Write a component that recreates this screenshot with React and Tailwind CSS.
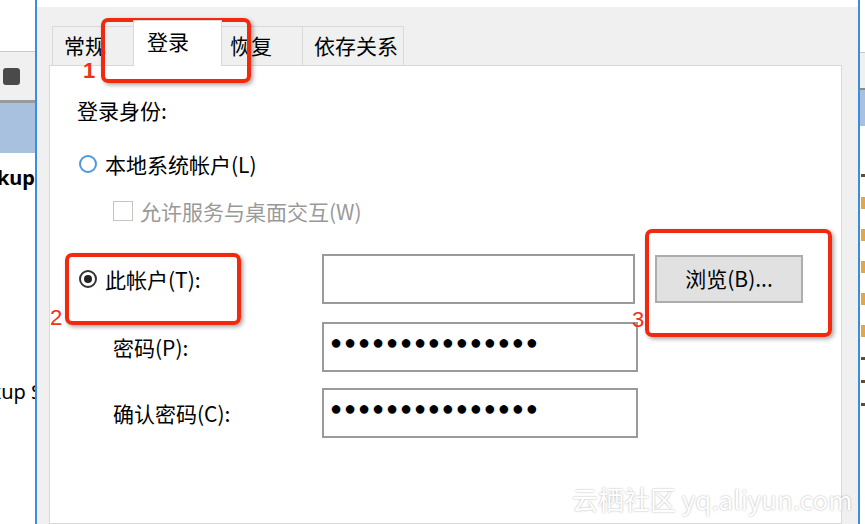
export default function App() {
  const dots = "●●●●●●●●●●●●●●●";
  return (
    <div className="relative flex w-[865px] h-[524px] overflow-hidden bg-white font-['Noto_Sans_CJK_SC',sans-serif] text-black">
      {/* left background window */}
      <div className="flex w-[35px] shrink-0 flex-col">
        <div className="h-[51px] bg-white" />
        <div className="h-px bg-[#c9c9c9]" />
        <div className="flex h-[48px] items-center bg-[#f0f0f0] pl-[3px]">
          <div className="h-[17px] w-[17px] rounded-[3px] bg-[#4a4a4a]" />
        </div>
        <div className="h-[3px] bg-[#9a9a9a]" />
        <div className="h-[50px] bg-[#a7c1de]" />
        <div className="mt-[11px] flex h-[28px] items-center justify-end overflow-hidden whitespace-nowrap font-['Noto_Sans',sans-serif] text-[20px] font-bold leading-[28px]">
          Backup
        </div>
        <div className="mt-[186px] flex h-[28px] items-center justify-end overflow-hidden whitespace-nowrap font-['Noto_Sans',sans-serif] text-[20px] leading-[28px]">
          <span className="mr-[-7px]">Backup S</span>
        </div>
      </div>
      <div className="w-[2px] shrink-0 bg-[#3b8de0]" />

      {/* dialog */}
      <div className="flex w-[821px] shrink-0 flex-col bg-[#f0f0f0]">
        <div className="h-[7px] bg-white" />
        <div className="flex h-[58px] items-end pl-[15px] text-[21px]">
          <div className="flex h-[39px] w-[81px] items-center border-l border-t border-[#d9d9d9] pb-[1px] pl-[11px]">常规</div>
          <div className="relative z-10 mb-[-1px] flex h-[46px] w-[89px] items-center border-l border-r border-t border-[#d9d9d9] bg-white pb-[4px] pl-[13px]">登录</div>
          <div className="flex h-[39px] w-[81px] items-center border-r border-t border-[#d9d9d9] pb-[1px] pl-[8px]">恢复</div>
          <div className="flex h-[39px] w-[101px] items-center border-r border-t border-[#d9d9d9] pb-[1px] pl-[11px]">依存关系</div>
        </div>
        <div className="ml-[12px] mr-[16px] flex flex-1 flex-col border border-[#d9d9d9] bg-white text-[21px]">
          <div className="mt-[30px] h-[28px] pl-[27px] leading-[28px]">登录身份:</div>
          <div className="mt-[26px] flex h-[28px] items-center pl-[29px]">
            <div className="h-[18px] w-[18px] rounded-full border-2 border-[#4f98dd] bg-white" />
            <span className="ml-[8px] leading-[28px]">本地系统帐户(L)</span>
          </div>
          <div className="mt-[19px] flex h-[28px] items-center pl-[63px]">
            <div className="h-[20px] w-[20px] border border-[#c4c4c4] bg-white" />
            <span className="ml-[7px] leading-[28px] text-[#999999]">允许服务与桌面交互(W)</span>
          </div>
          <div className="mt-[29px] flex h-[50px] items-center pl-[29px]">
            <div className="flex w-[243px] items-center">
              <div className="flex h-[18px] w-[18px] items-center justify-center rounded-full border-2 border-[#333333] bg-white">
                <div className="h-[8px] w-[8px] rounded-full bg-[#222222]" />
              </div>
              <span className="ml-[8px] leading-[28px]">此帐户(T):</span>
            </div>
            <div className="h-[50px] w-[313px] border-2 border-[#9a9a9a] bg-white" />
            <div className="ml-[20px] flex h-[48px] w-[148px] items-center justify-center border-2 border-[#adadad] bg-[#e1e1e1]">
              浏览(B)...
            </div>
          </div>
          <div className="mt-[18px] flex h-[50px] items-center pl-[63px]">
            <div className="w-[209px] leading-[28px]">密码(P):</div>
            <div className="flex h-[50px] w-[316px] items-center border-2 border-[#9a9a9a] bg-white pb-[10px] pl-[6px] font-['Liberation_Sans',sans-serif] text-[20px] tracking-[1.9px]">
              {dots}
            </div>
          </div>
          <div className="mt-[16px] flex h-[50px] items-center pl-[63px]">
            <div className="w-[209px] leading-[28px]">确认密码(C):</div>
            <div className="flex h-[50px] w-[316px] items-center border-2 border-[#9a9a9a] bg-white pb-[10px] pl-[6px] font-['Liberation_Sans',sans-serif] text-[20px] tracking-[1.9px]">
              {dots}
            </div>
          </div>
        </div>
      </div>
      <div className="w-[2px] shrink-0 bg-[#3b8de0]" />

      {/* right background window sliver */}
      <div className="flex w-[5px] shrink-0 flex-col">
        <div className="h-[52px] bg-white" />
        <div className="h-px bg-[#c9c9c9]" />
        <div className="h-[35px] bg-[#f0f0f0]" />
        <div className="h-[2px] bg-[#8a8a8a]" />
        <div className="h-[36px] bg-[#a7c1de]" />
        <div className="flex flex-col gap-[20px] pl-[1px] pt-[48px]">
          <div className="h-[3px] w-[4px] bg-[#6b4a2a]" />
          <div className="h-[12px] w-[4px] bg-[#e5a54a]" />
          <div className="h-[12px] w-[4px] bg-[#e5a54a]" />
          <div className="h-[12px] w-[4px] bg-[#e5a54a]" />
          <div className="h-[12px] w-[4px] bg-[#e5a54a]" />
          <div className="h-[12px] w-[4px] bg-[#e5a54a]" />
          <div className="h-[3px] w-[4px] bg-[#6b4a2a]" />
          <div className="h-[3px] w-[4px] bg-[#6b4a2a]" />
          <div className="h-[3px] w-[4px] bg-[#6b4a2a]" />
        </div>
      </div>

      {/* annotations */}
      <div className="absolute left-[101px] top-[18px] h-[65px] w-[150px] rounded-[7px] border-4 border-[#f2290f] shadow-[2px_2px_4px_rgba(0,0,0,0.35)]" />
      <div className="absolute left-[65px] top-[253px] h-[72px] w-[176px] rounded-[7px] border-4 border-[#f2290f] shadow-[2px_2px_4px_rgba(0,0,0,0.35)]" />
      <div className="absolute left-[645px] top-[229px] h-[108px] w-[187px] rounded-[7px] border-4 border-[#f2290f] shadow-[2px_2px_4px_rgba(0,0,0,0.35)]" />
      <div className="absolute left-[83px] top-[60px] font-['Liberation_Sans',sans-serif] text-[22px] font-bold leading-[22px] text-[#f03018]">1</div>
      <div className="absolute left-[50px] top-[307px] font-['Liberation_Sans',sans-serif] text-[22px] leading-[22px] text-[#f03018]">2</div>
      <div className="absolute left-[632px] top-[309px] font-['Liberation_Sans',sans-serif] text-[22px] leading-[22px] text-[#f03018]">3</div>
      <div className="absolute left-[572px] top-[482px] whitespace-nowrap text-[26px] leading-[34px] text-white [text-shadow:0_0_2px_rgba(0,0,0,0.35)]">
        云栖社区 yq.aliyun.com
      </div>
    </div>
  );
}
